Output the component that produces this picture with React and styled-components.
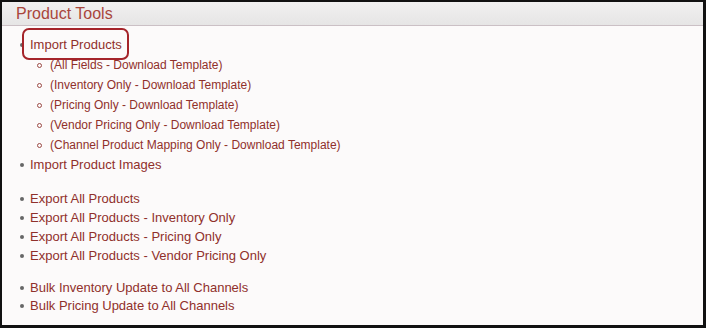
import React from 'react';
import styled, { createGlobalStyle } from 'styled-components';

const GlobalStyle = createGlobalStyle`
  html, body {
    margin: 0;
    padding: 0;
    background: #ffffff;
  }
  body {
    font-family: 'Liberation Sans', Arial, sans-serif;
  }
`;

const Frame = styled.div`
  width: 706px;
  height: 328px;
  box-sizing: border-box;
  border: 2px solid #111;
  border-right-width: 3px;
  border-bottom-width: 3px;
  background: #fcfafa;
  display: flex;
  flex-direction: column;
  overflow: hidden;
`;

const Header = styled.div`
  height: 23px;
  flex-shrink: 0;
  display: flex;
  align-items: center;
  padding-left: 14px;
  background: linear-gradient(to bottom, #f1f0f0, #e6e5e5);
  border-bottom: 1px solid #cbc0c5;
`;

const Title = styled.h2`
  margin: 0;
  font-size: 16px;
  font-weight: normal;
  color: #a9463c;
  line-height: 20px;
`;

const Body = styled.div`
  padding: 9px 0 0 0;
  display: flex;
  flex-direction: column;
`;

const List = styled.ul`
  list-style: none;
  margin: ${(p) => p.$gap}px 0 0 0;
  padding: 0 0 0 28px;
  font-size: 13px;
  line-height: ${(p) => p.$lh}px;
  color: #90302b;
`;

const Item = styled.li`
  position: relative;

  &::before {
    content: '';
    position: absolute;
    left: -10px;
    top: ${(p) => p.$lh / 2 - 2}px;
    width: 4px;
    height: 4px;
    border-radius: 50%;
    background: #666;
  }
`;

const SubList = styled.ul`
  list-style: none;
  margin: 0;
  padding: 0 0 0 20px;
  font-size: 12px;
  line-height: 20px;
`;

const SubItem = styled.li`
  position: relative;

  &::before {
    content: '';
    position: absolute;
    left: -13px;
    top: 8px;
    width: 3px;
    height: 3px;
    border-radius: 50%;
    border: 1px solid #9b4a45;
  }
`;

const Link = styled.a`
  color: inherit;
  text-decoration: none;
  cursor: pointer;
`;

const Highlighted = styled.span`
  position: relative;

  &::after {
    content: '';
    position: absolute;
    left: -8px;
    right: -7px;
    top: -9px;
    bottom: -8px;
    border: 2px solid #a5242a;
    border-radius: 7px;
  }
`;

const groups = [
  {
    lh: 20,
    gap: 0,
    items: [
      {
        label: 'Import Products',
        highlight: true,
        sub: [
          '(All Fields - Download Template)',
          '(Inventory Only - Download Template)',
          '(Pricing Only - Download Template)',
          '(Vendor Pricing Only - Download Template)',
          '(Channel Product Mapping Only - Download Template)',
        ],
      },
      { label: 'Import Product Images' },
    ],
  },
  {
    lh: 19,
    gap: 14,
    items: [
      { label: 'Export All Products' },
      { label: 'Export All Products - Inventory Only' },
      { label: 'Export All Products - Pricing Only' },
      { label: 'Export All Products - Vendor Pricing Only' },
    ],
  },
  {
    lh: 18,
    gap: 14,
    items: [
      { label: 'Bulk Inventory Update to All Channels' },
      { label: 'Bulk Pricing Update to All Channels' },
    ],
  },
];

export default function App() {
  return (
    <>
      <GlobalStyle />
      <Frame>
        <Header>
          <Title>Product Tools</Title>
        </Header>
        <Body>
          {groups.map((group, gi) => (
            <List key={gi} $lh={group.lh} $gap={group.gap}>
              {group.items.map((item) => (
                <Item key={item.label} $lh={group.lh}>
                  <Link>
                    {item.highlight ? <Highlighted>{item.label}</Highlighted> : item.label}
                  </Link>
                  {item.sub && (
                    <SubList>
                      {item.sub.map((s) => (
                        <SubItem key={s}>
                          <Link>{s}</Link>
                        </SubItem>
                      ))}
                    </SubList>
                  )}
                </Item>
              ))}
            </List>
          ))}
        </Body>
      </Frame>
    </>
  );
}
